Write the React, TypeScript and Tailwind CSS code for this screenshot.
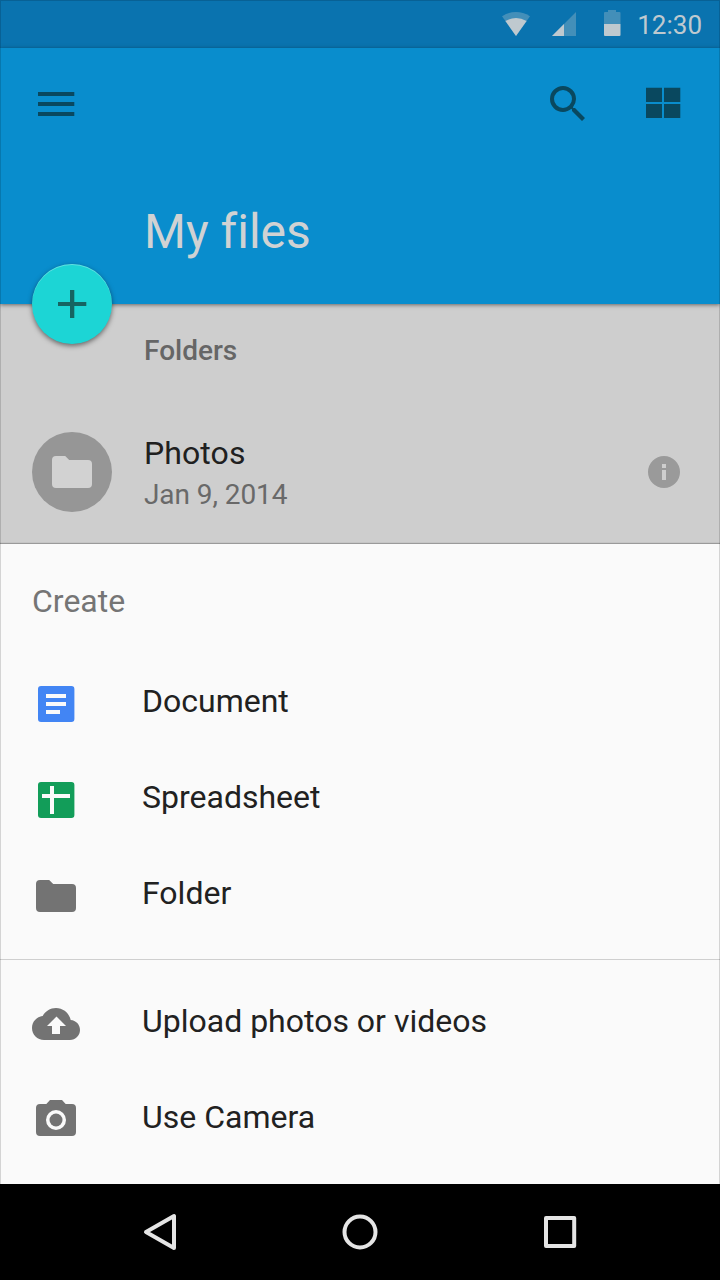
import type { ReactNode } from 'react';

const FOLDER = 'M6 8h11.2l4 4H40a4 4 0 0 1 4 4v20a4 4 0 0 1-4 4H8a4 4 0 0 1-4-4V12a4 4 0 0 1 4-4z';

function Icon({ children, className = 'size-12' }: { children: ReactNode; className?: string }) {
  return (
    <svg viewBox="0 0 48 48" className={`block shrink-0 ${className}`} fill="currentColor" aria-hidden="true">
      {children}
    </svg>
  );
}

function StatusBar() {
  return (
    <div className="flex h-12 items-center justify-end bg-[#0a73af] pr-[18px] text-[#bfc9cf]">
      <svg width="28" height="24" viewBox="0 0 28 24" className="mr-[22px]" fill="currentColor">
        <path d="M0 4.2Q14-4.2 28 4.2L14 24z" opacity=".32" />
        <path d="M3.4 9Q14 3 24.6 9L14 24z" />
      </svg>
      <svg width="24" height="24" viewBox="0 0 24 24" className="mr-[28px]" fill="currentColor">
        <path d="M0 24L24 0V24z" opacity=".32" />
        <path d="M0 24L12 12V24z" />
      </svg>
      <svg width="17" height="26" viewBox="0 0 17 26" className="mr-[16px] -translate-y-px" fill="currentColor">
        <path d="M4 0h8v2h3.5q1 0 1 1v11H0V3q0-1 1-1h3z" opacity=".32" />
        <path d="M0 14h16.5v11q0 1-1 1H1q-1 0-1-1z" />
      </svg>
      <span className="pt-0.5 text-[26px] leading-none">12:30</span>
    </div>
  );
}

function AppBar() {
  return (
    <header className="relative z-10 h-64 bg-[#098dcd] shadow-[0_1px_4px_rgba(0,0,0,0.5)]">
      <div className="flex h-28 items-center px-8 text-[#09485f]">
        <Icon>
          <path d="M6 12h36.300v4H6zM6 22h36.300v4H6zM6 32h36.300v4H6z" />
        </Icon>
        <Icon className="ml-auto size-12">
          <path
            fillRule="evenodd"
            d="M31 28h-1.6l-.6-.6A12.9 12.9 0 0 0 32 19 13 13 0 1 0 19 32c3.200 0 6.200-1.200 8.400-3.200l.6.6V31l10 10 3-3zM19 28a9 9 0 1 1 0-18 9 9 0 0 1 0 18z"
          />
        </Icon>
        <Icon className="ml-12 size-12">
          <path d="M6 7.700h16v14.300H6zM24 7.700h16.300v14.300H24zM6 24h16v14H6zM24 24h16.300v14H24z" />
        </Icon>
      </div>
      <h1 className="pl-36 pt-11 text-[48px] leading-[56px] text-[#d0d2d3] [font-variant-ligatures:none]">My files</h1>
      <button
        aria-label="Create new"
        className="absolute -bottom-10 left-8 flex size-20 items-center justify-center rounded-full bg-[#1cd5d5] text-[#166462] shadow-[0_2px_5px_rgba(0,0,0,0.5),inset_0_1px_0_rgba(255,255,255,0.3)]"
      >
        <Icon>
          <path d="M38.300 26H26.300v12h-4.300V26H10v-4h12V10h4.300v12h12z" />
        </Icon>
      </button>
    </header>
  );
}

function FileList() {
  return (
    <section className="h-60 bg-[#cecece]">
      <h2 className="flex h-24 items-center pb-0.5 pl-36 text-[28px] font-medium leading-8 text-[#666]">Folders</h2>
      <div className="flex h-36 items-start px-8 pt-8">
        <div className="flex size-20 shrink-0 items-center justify-center rounded-full bg-[#969696] text-[#d2d2d2]">
          <Icon>
            <path d={FOLDER} />
          </Icon>
        </div>
        <div className="ml-8 flex-1 pt-px">
          <div className="text-[32px] leading-10 tracking-[0.1px] text-[#202020]">Photos</div>
          <div className="pt-0.5 text-[28px] leading-10 tracking-[-0.08px] text-[#696969]">Jan 9, 2014</div>
        </div>
        <Icon className="mt-4 size-12 text-[#9a9a9a]">
          <path fillRule="evenodd" d="M24 8a16 16 0 1 0 0 32 16 16 0 0 0 0-32zm-2 8h4v4h-4zm0 6h4v10h-4z" />
        </Icon>
      </div>
    </section>
  );
}

function Row({ label, color, children }: { label: string; color: string; children: ReactNode }) {
  return (
    <li className="flex h-24 items-center pl-8">
      <Icon className={`size-12 ${color}`}>{children}</Icon>
      <span className="ml-[62px] pb-[7px] text-[32px] leading-10 text-[#212121]">{label}</span>
    </li>
  );
}

function CreateSheet() {
  return (
    <section className="relative z-10 h-[640px] bg-[#fafafa] shadow-[0_-1px_1px_rgba(0,0,0,0.25)]">
      <h2 className="flex h-28 items-center pl-8 pt-0.5 text-[32px] text-[#757575]">Create</h2>
      <ul className="pb-[15px]">
        <Row label="Document" color="text-[#4285f4]">
          <rect x="6" y="6" width="36.4" height="36" rx="3" />
          <path fill="#fafafa" d="M14 14h20v4H14zM14 22h20v4H14zM14 30h14v4H14z" />
        </Row>
        <Row label="Spreadsheet" color="text-[#129d59]">
          <rect x="6" y="6" width="36.4" height="36" rx="3" />
          <path fill="#fafafa" d="M18 10h4v8h16v4H22v16h-4V22h-8v-4h8z" />
        </Row>
        <Row label="Folder" color="text-[#737373]">
          <path d={FOLDER} />
        </Row>
      </ul>
      <ul className="border-t border-[#cfcfcf] pt-4">
        <Row label="Upload photos or videos" color="text-[#737373]">
          <path
            fillRule="evenodd"
            d="M38.700 20.080C37.340 13.180 31.280 8 24 8c-5.780 0-10.800 3.280-13.300 8.080C4.680 16.720 0 21.820 0 28c0 6.620 5.380 12 12 12h26c5.520 0 10-4.480 10-10 0-5.280-4.100-9.560-9.300-9.920zM28 26v8h-8v-8h-5l9.500-9.500L34 26z"
          />
        </Row>
        <Row label="Use Camera" color="text-[#737373]">
          <path
            fillRule="evenodd"
            d="M18 4l-3.660 4H8a4 4 0 0 0-4 4v24a4 4 0 0 0 4 4h32a4 4 0 0 0 4-4V12a4 4 0 0 0-4-4h-6.340L30 4zM24 14a10 10 0 1 0 0 20 10 10 0 0 0 0-20z"
          />
          <circle cx="24" cy="24" r="6.500" />
        </Row>
      </ul>
    </section>
  );
}

function NavBar() {
  return (
    <nav className="relative z-20 flex h-24 items-center justify-center gap-[152px] bg-black text-[#e5e5e5]">
      <Icon>
        <path d="M10 24L38 8v32z" fill="none" stroke="currentColor" strokeWidth="4" strokeLinejoin="round" />
      </Icon>
      <Icon>
        <circle cx="24" cy="24" r="15.500" fill="none" stroke="currentColor" strokeWidth="4" />
      </Icon>
      <Icon>
        <rect x="10" y="10" width="28.200" height="28" fill="none" stroke="currentColor" strokeWidth="4" strokeLinejoin="round" />
      </Icon>
    </nav>
  );
}

export default function App() {
  return (
    <div className="relative h-[1280px] w-[720px] overflow-hidden bg-black font-['Roboto',sans-serif]">
      <StatusBar />
      <AppBar />
      <FileList />
      <CreateSheet />
      <NavBar />
      <div className="pointer-events-none absolute inset-0 z-10 border border-b-0 border-black/15" />
    </div>
  );
}
